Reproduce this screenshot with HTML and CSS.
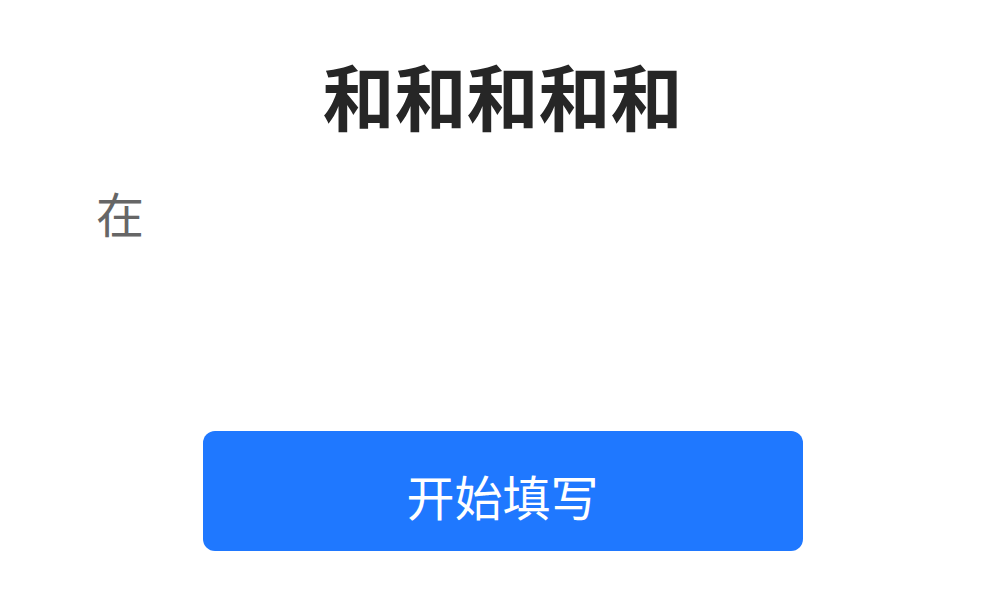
FILE: index.html
```html
<!DOCTYPE html>
<html lang="zh">
<head>
<meta charset="utf-8">
<link rel="stylesheet" href="styles.css">
</head>
<body>
<div class="page">
  <h1 class="title">和和和和和</h1>
  <p class="desc">在</p>
  <div class="actions">
    <button class="start">开始填写</button>
  </div>
</div>
</body>
</html>
```
FILE: styles.css
```css
html, body {
  margin: 0;
  padding: 0;
  background: #ffffff;
}
.page {
  width: 1005px;
  height: 600px;
  display: flex;
  flex-direction: column;
  font-family: "Noto Sans CJK SC", "Noto Sans", sans-serif;
}
.title {
  margin: 52px 0 0;
  text-align: center;
  font-size: 72px;
  line-height: 84px;
  font-weight: 700;
  color: #262626;
}
.desc {
  margin: 44px 0 0 96px;
  font-size: 48px;
  line-height: 64px;
  color: #666666;
}
.actions {
  margin-top: 187px;
  display: flex;
  justify-content: center;
}
.start {
  width: 600px;
  height: 120px;
  border: none;
  border-radius: 12px;
  background: #1f78ff;
  color: #ffffff;
  font-family: "Noto Sans CJK SC", "Noto Sans", sans-serif;
  font-size: 48px;
  padding: 8px 0 0;
}
```
